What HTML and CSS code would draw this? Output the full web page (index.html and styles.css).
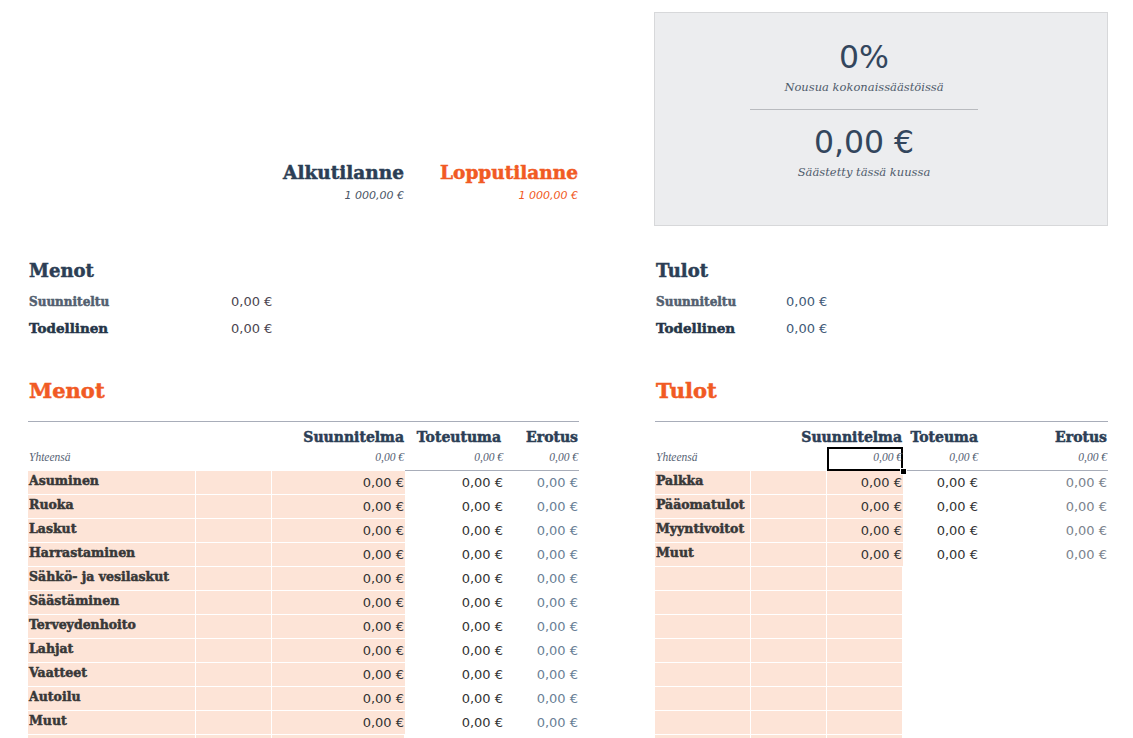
FILE: index.html
```html
<!DOCTYPE html>
<html lang="fi">
<head>
<meta charset="utf-8">
<title>Budjetti</title>
<link rel="stylesheet" href="styles.css">
</head>
<body>
<div class="page">
  <div class="balances">
    <div class="bal">
      <div class="bal-title dark">Alkutilanne</div>
      <div class="bal-val dark-val">1 000,00 €</div>
    </div>
    <div class="bal">
      <div class="bal-title orange">Lopputilanne</div>
      <div class="bal-val orange">1 000,00 €</div>
    </div>
  </div>

  <div class="kpi">
    <div class="kpi-inner">
      <div class="kpi-big">0%</div>
      <div class="kpi-sub">Nousua kokonaissäästöissä</div>
      <div class="kpi-rule"></div>
      <div class="kpi-big">0,00 €</div>
      <div class="kpi-sub">Säästetty tässä kuussa</div>
    </div>
  </div>

  <div class="summary">
    <div class="sum-title">Menot</div>
    <div class="sum-grid sum-menot">
      <div class="sum-label light">Suunniteltu</div><div class="sum-val">0,00 €</div>
      <div class="sum-label">Todellinen</div><div class="sum-val">0,00 €</div>
    </div>
  </div>

  <div class="summary">
    <div class="sum-title">Tulot</div>
    <div class="sum-grid sum-tulot">
      <div class="sum-label light">Suunniteltu</div><div class="sum-val blue">0,00 €</div>
      <div class="sum-label">Todellinen</div><div class="sum-val blue">0,00 €</div>
    </div>
  </div>

  <div class="table-block">
    <div class="tbl-title">Menot</div>
    <div class="tbl tbl-menot">
      <div class="th"></div><div class="th"></div><div class="th r">Suunnitelma</div><div class="th r th-tot">Toteutuma</div><div class="th r">Erotus</div>
      <div class="tot-l">Yhteensä</div><div class="tot"></div><div class="tot r">0,00 €</div><div class="tot r ul">0,00 €</div><div class="tot r ul">0,00 €</div>

      <div class="c p lab">Asuminen</div><div class="c p"></div><div class="c p v">0,00 €</div><div class="c v">0,00 €</div><div class="c v e">0,00 €</div>
      <div class="c p lab">Ruoka</div><div class="c p"></div><div class="c p v">0,00 €</div><div class="c v">0,00 €</div><div class="c v e">0,00 €</div>
      <div class="c p lab">Laskut</div><div class="c p"></div><div class="c p v">0,00 €</div><div class="c v">0,00 €</div><div class="c v e">0,00 €</div>
      <div class="c p lab">Harrastaminen</div><div class="c p"></div><div class="c p v">0,00 €</div><div class="c v">0,00 €</div><div class="c v e">0,00 €</div>
      <div class="c p lab">Sähkö- ja vesilaskut</div><div class="c p"></div><div class="c p v">0,00 €</div><div class="c v">0,00 €</div><div class="c v e">0,00 €</div>
      <div class="c p lab">Säästäminen</div><div class="c p"></div><div class="c p v">0,00 €</div><div class="c v">0,00 €</div><div class="c v e">0,00 €</div>
      <div class="c p lab">Terveydenhoito</div><div class="c p"></div><div class="c p v">0,00 €</div><div class="c v">0,00 €</div><div class="c v e">0,00 €</div>
      <div class="c p lab">Lahjat</div><div class="c p"></div><div class="c p v">0,00 €</div><div class="c v">0,00 €</div><div class="c v e">0,00 €</div>
      <div class="c p lab">Vaatteet</div><div class="c p"></div><div class="c p v">0,00 €</div><div class="c v">0,00 €</div><div class="c v e">0,00 €</div>
      <div class="c p lab">Autoilu</div><div class="c p"></div><div class="c p v">0,00 €</div><div class="c v">0,00 €</div><div class="c v e">0,00 €</div>
      <div class="c p lab">Muut</div><div class="c p"></div><div class="c p v">0,00 €</div><div class="c v">0,00 €</div><div class="c v e">0,00 €</div>
      <div class="c p"></div><div class="c p"></div><div class="c p"></div><div class="c"></div><div class="c"></div>
    </div>
  </div>

  <div class="table-block">
    <div class="tbl-title">Tulot</div>
    <div class="tbl tbl-tulot">
      <div class="th"></div><div class="th"></div><div class="th r">Suunnitelma</div><div class="th r">Toteuma</div><div class="th r">Erotus</div>
      <div class="tot-l">Yhteensä</div><div class="tot"></div><div class="tot r selected">0,00 €</div><div class="tot r ul">0,00 €</div><div class="tot r ul">0,00 €</div>

      <div class="c p lab">Palkka</div><div class="c p"></div><div class="c p v">0,00 €</div><div class="c v">0,00 €</div><div class="c v e2">0,00 €</div>
      <div class="c p lab">Pääomatulot</div><div class="c p"></div><div class="c p v">0,00 €</div><div class="c v">0,00 €</div><div class="c v e2">0,00 €</div>
      <div class="c p lab">Myyntivoitot</div><div class="c p"></div><div class="c p v">0,00 €</div><div class="c v">0,00 €</div><div class="c v e2">0,00 €</div>
      <div class="c p lab">Muut</div><div class="c p"></div><div class="c p v">0,00 €</div><div class="c v">0,00 €</div><div class="c v e2">0,00 €</div>
      <div class="c p"></div><div class="c p"></div><div class="c p"></div><div class="c"></div><div class="c"></div>
      <div class="c p"></div><div class="c p"></div><div class="c p"></div><div class="c"></div><div class="c"></div>
      <div class="c p"></div><div class="c p"></div><div class="c p"></div><div class="c"></div><div class="c"></div>
      <div class="c p"></div><div class="c p"></div><div class="c p"></div><div class="c"></div><div class="c"></div>
      <div class="c p"></div><div class="c p"></div><div class="c p"></div><div class="c"></div><div class="c"></div>
      <div class="c p"></div><div class="c p"></div><div class="c p"></div><div class="c"></div><div class="c"></div>
      <div class="c p"></div><div class="c p"></div><div class="c p"></div><div class="c"></div><div class="c"></div>
      <div class="c p"></div><div class="c p"></div><div class="c p"></div><div class="c"></div><div class="c"></div>
    </div>
  </div>
</div>
</body>
</html>
```

FILE: styles.css
```css
html, body {
  margin: 0;
  padding: 0;
  background: #ffffff;
  overflow: hidden;
}
body {
  width: 1133px;
  height: 738px;
  font-family: "DejaVu Sans", Verdana, sans-serif;
}
.page {
  padding: 12px 0 0 28px;
  display: grid;
  grid-template-columns: 551px 453px;
  column-gap: 76px;
  align-items: start;
}

/* ---------- heavy slab headings ---------- */
.bal-title, .sum-title, .tbl-title, .th, .lab, .sum-label {
  font-family: "DejaVu Serif", serif;
  font-weight: bold;
  -webkit-text-stroke: 0.5px currentColor;
}

/* ---------- top balances ---------- */
.balances {
  display: grid;
  grid-template-columns: 376px 174px;
  padding-top: 150px;
}
.bal { text-align: right; }
.bal-title {
  font-size: 18.5px;
  line-height: 22px;
}
.bal-val {
  font-family: "DejaVu Sans", sans-serif;
  font-style: italic;
  font-size: 11px;
  line-height: 20px;
  margin-top: 2px;
}
.dark { color: #2c3e55; }
.dark-val { color: #4a5566; }
.orange { color: #f15a24; }

/* ---------- KPI box ---------- */
.kpi {
  margin-left: -1px;
  height: 212px;
  background: #ecedef;
  border: 1px solid #d7d8da;
}
.kpi-inner {
  width: 228px;
  margin-left: 95px;
  padding-top: 22px;
  text-align: center;
  color: #33465d;
}
.kpi-big {
  font-size: 31.5px;
  line-height: 44px;
}
.kpi-sub {
  font-family: "DejaVu Serif", serif;
  font-style: italic;
  font-size: 11.5px;
  line-height: 16px;
  color: #4f5b6b;
}
.kpi-rule {
  height: 1px;
  background: #b9bbbf;
  margin: 14px 0 10px;
}

/* ---------- summaries ---------- */
.summary {
  padding-top: 33px;
}
.sum-title {
  font-size: 18px;
  line-height: 24px;
  color: #2c3e55;
  margin-left: 1px;
}
.sum-grid {
  display: grid;
  grid-auto-rows: 26px;
  align-items: baseline;
  margin-top: 6px;
}
.sum-menot { grid-template-columns: 203px auto; }
.sum-tulot { grid-template-columns: 131px auto; }
.sum-label {
  font-size: 13.5px;
  color: #253548;
  margin-left: 1px;
  line-height: 26px;
}
.sum-label.light {
  font-size: 12px;
  color: #535f70;
}
.sum-val {
  font-size: 13px;
  color: #4c4650;
  line-height: 26px;
}
.sum-val.blue { color: #3f5a77; }

/* ---------- tables ---------- */
.table-block {
  padding-top: 36px;
}
.tbl-title {
  font-size: 21px;
  line-height: 28px;
  color: #f15a24;
  height: 45px;
  border-bottom: 1px solid #a8adb9;
  box-sizing: border-box;
  padding-left: 1px;
}
.tbl {
  display: grid;
  grid-auto-rows: 24px;
}
.tbl-menot { grid-template-columns: 168px 76px 133px 99px 75px; grid-template-rows: 25px 24px; }
.tbl-tulot { grid-template-columns: 96px 76px 76px 76px 129px; grid-template-rows: 25px 24px; }

.th {
  font-size: 14px;
  line-height: 20px;
  color: #2c3e55;
  align-self: end;
  white-space: nowrap;
  display: flex;
  justify-content: flex-end;
}
.r { text-align: right; padding-right: 1px; }
.th.th-tot { padding-right: 3px; }
.tot-l, .tot {
  font-family: "Liberation Serif", serif;
  font-style: italic;
  font-size: 11.5px;
  line-height: 18px;
  color: #566274;
  box-sizing: border-box;
  height: 24px;
  padding-top: 1px;
}
.tot-l { padding-left: 1px; }
.tot.ul { border-bottom: 1px solid #a8adb9; }
.tot.selected {
  position: relative;
  box-shadow: inset 0 0 0 2px #000;
}
.tot.selected::after {
  content: "";
  position: absolute;
  width: 7px;
  height: 7px;
  right: -4px;
  bottom: -4px;
  background: #000;
  border: 1px solid #fff;
  box-sizing: border-box;
}

.c {
  box-sizing: border-box;
  height: 24px;
  border-bottom: 1px solid #ffffff;
  font-size: 13px;
  line-height: 23px;
  white-space: nowrap;
  overflow: hidden;
}
.c.p {
  background: #fde4d7;
  border-right: 1px solid #ffffff;
}
.c.p.v { border-right: 0; }
.lab {
  font-size: 12.5px;
  color: #383838;
  padding-left: 1px;
  line-height: 20px;
}
.v {
  text-align: right;
  padding-right: 1px;
  color: #333333;
}
.v.e { color: #6a7f96; }
.v.e2 { color: #7b838d; }
```
